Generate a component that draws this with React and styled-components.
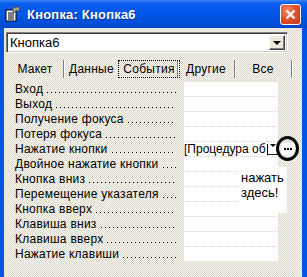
import styled, { createGlobalStyle } from "styled-components";

const GlobalStyle = createGlobalStyle`
  html, body { margin: 0; padding: 0; }
  body { font-family: "Liberation Sans", Arial, sans-serif; }
`;

const events = [
  "Вход",
  "Выход",
  "Получение фокуса",
  "Потеря фокуса",
  "Нажатие кнопки",
  "Двойное нажатие кнопки",
  "Кнопка вниз",
  "Перемещение указателя",
  "Кнопка вверх",
  "Клавиша вниз",
  "Клавиша вверх",
  "Нажатие клавиши",
];

const tabs = ["Макет", "Данные", "События", "Другие", "Все"];
const ACTIVE_TAB = 2;
const ACTIVE_ROW = 4;

const Window = styled.div`
  width: 307px;
  height: 277px;
  overflow: hidden;
  display: flex;
  flex-direction: column;
  background: #0055e5;
`;

const TitleBar = styled.div`
  height: 28px;
  flex: none;
  display: flex;
  align-items: center;
  padding: 0 6px 0 5px;
  background: linear-gradient(#3a86f5, #0a5cee 12%, #0055e5 55%, #004fd9 85%, #0044c2);
`;

const Title = styled.span`
  margin-left: 6px;
  color: #fff;
  font-weight: bold;
  font-size: 13px;
  letter-spacing: 0.2px;
  text-shadow: 1px 1px #0b2f8f;
`;

const CloseButton = styled.div`
  margin-left: auto;
  width: 19px;
  height: 19px;
  border: 1px solid #fff;
  border-radius: 3px;
  background: radial-gradient(circle at 35% 30%, #f08a6a, #e0532e 45%, #c23a18);
  display: flex;
  align-items: center;
  justify-content: center;
`;

const Body = styled.div`
  flex: 1;
  margin: 0 5px 0 4px;
  padding: 4px 0 0 2px;
  position: relative;
  display: flex;
  flex-direction: column;
  background-color: #ece9d8;
  background-image: repeating-conic-gradient(#fbfaf6 0% 25%, #d9d5c7 0% 50%);
  background-size: 2px 2px;
`;

const Combo = styled.div`
  width: 282px;
  height: 21px;
  box-sizing: border-box;
  display: flex;
  align-items: center;
  background: #fff;
  border-top: 1px solid #808080;
  border-left: 1px solid #808080;
  border-bottom: 1px solid #fff;
  border-right: 1px solid #fff;
  box-shadow: inset 1px 1px #404040, inset -1px -1px #d4d0c8;
  padding: 2px 2px 2px 3px;
  font-size: 13px;
`;

const ComboText = styled.span`
  flex: 1;
`;

const DropButton = styled.span`
  width: 16px;
  height: 15px;
  box-sizing: border-box;
  display: flex;
  align-items: center;
  justify-content: center;
  background: #ece9d8;
  border-top: 1px solid #fff;
  border-left: 1px solid #fff;
  border-right: 1px solid #404040;
  border-bottom: 1px solid #404040;
  box-shadow: inset -1px -1px #808080;
`;

const Arrow = styled.span`
  width: 0;
  height: 0;
  border-left: ${(p) => p.$s || 4}px solid transparent;
  border-right: ${(p) => p.$s || 4}px solid transparent;
  border-top: ${(p) => p.$s || 4}px solid #000;
`;

const TabRow = styled.div`
  display: flex;
  margin-top: 7px;
  padding-left: 1px;
  height: 19px;
`;

const Tab = styled.div`
  width: 57px;
  height: 18px;
  box-sizing: border-box;
  display: flex;
  align-items: center;
  justify-content: center;
  font-size: 12px;
  letter-spacing: 0.25px;
  border-right: ${(p) => (p.$hideSep ? "2px solid transparent" : "1px solid #808080")};
  box-shadow: ${(p) => (p.$hideSep ? "none" : "1px 0 #fff")};
`;

const TabFocus = styled.span`
  outline: 1px dotted #000;
  padding: 1px 4px;
`;

const Sheet = styled.div`
  margin-top: 3px;
  display: grid;
  grid-template-columns: 178px 94px 24px;
  grid-auto-rows: 14px;
  row-gap: 1px;
  font-size: 12px;
  letter-spacing: 0.25px;
`;

const Label = styled.div`
  display: flex;
  align-items: center;
  padding: 0 8px 0 9px;
  white-space: nowrap;
`;

const Leader = styled.span`
  flex: 1;
  align-self: flex-end;
  height: 1px;
  margin: 0 0 3px 4px;
  background: linear-gradient(90deg, #000 1px, transparent 1px) 0 0 / 4px 1px repeat-x;
`;

const Value = styled.div`
  background: #fff;
  display: flex;
  align-items: center;
  white-space: nowrap;
  overflow: hidden;
  letter-spacing: 0;
`;

const Caret = styled.span`
  width: 1px;
  height: 11px;
  background: #000;
  margin-left: 1px;
`;

const CellDrop = styled.span`
  margin-left: 1px;
  width: 15px;
  height: 10px;
  display: flex;
  align-items: flex-start;
  justify-content: center;
  border-bottom: 1px solid #202020;
  padding-top: 1px;
`;

const BuilderCell = styled.div`
  position: relative;
  display: flex;
  align-items: center;
  padding-left: 3px;
`;

const Builder = styled.span`
  width: 14px;
  height: 12px;
  background: #fff;
  display: flex;
  align-items: center;
  justify-content: center;
  gap: 1px;
`;

const Dot = styled.span`
  width: 2px;
  height: 2px;
  background: #000;
`;

const Ring = styled.span`
  position: absolute;
  left: -2px;
  top: -6px;
  width: 17px;
  height: 19px;
  border: 3px solid #000;
  border-radius: 50%;
`;

const Note = styled.div`
  position: absolute;
  left: 235px;
  top: 139px;
  width: 48px;
  height: 46px;
  box-sizing: border-box;
  padding: 3px 0 0 2px;
  background: #fff;
  font-size: 13px;
  line-height: 15px;
`;

function SheetIcon() {
  return (
    <svg width="16" height="16" viewBox="0 0 16 16">
      <rect x="1" y="4" width="10" height="11" fill="#fff" stroke="#000" />
      <line x1="3" y1="7" x2="9" y2="7" stroke="#000" />
      <line x1="3" y1="9" x2="9" y2="9" stroke="#000" />
      <line x1="3" y1="11" x2="9" y2="11" stroke="#000" />
      <line x1="3" y1="13" x2="9" y2="13" stroke="#000" />
      <path d="M7 3 L10 1 L14 1 L15 3 L14 5 L11 5 L9 7 Z" fill="#9a9a9a" stroke="#404040" strokeWidth="0.8" />
    </svg>
  );
}

export default function App() {
  return (
    <>
      <GlobalStyle />
      <Window>
        <TitleBar>
          <SheetIcon />
          <Title>Кнопка: Кнопка6</Title>
          <CloseButton>
            <svg width="11" height="11" viewBox="0 0 11 11">
              <path d="M1.5 1.5 L9.5 9.5 M9.5 1.5 L1.5 9.5" stroke="#fff" strokeWidth="2.2" />
            </svg>
          </CloseButton>
        </TitleBar>
        <Body>
          <Combo>
            <ComboText>Кнопка6</ComboText>
            <DropButton>
              <Arrow $s={4} />
            </DropButton>
          </Combo>
          <TabRow>
            {tabs.map((t, i) => (
              <Tab key={t} $hideSep={i === ACTIVE_TAB - 1}>
                {i === ACTIVE_TAB ? <TabFocus>{t}</TabFocus> : t}
              </Tab>
            ))}
          </TabRow>
          <Sheet>
            {events.flatMap((e, i) => [
              <Label key={e + "l"}>
                {e}
                <Leader />
              </Label>,
              <Value key={e + "v"}>
                {i === ACTIVE_ROW && (
                  <>
                    [Процедура об
                    <Caret />
                    <CellDrop>
                      <Arrow $s={3} />
                    </CellDrop>
                  </>
                )}
              </Value>,
              <BuilderCell key={e + "b"}>
                {i === ACTIVE_ROW && (
                  <>
                    <Builder>
                      <Dot />
                      <Dot />
                      <Dot />
                    </Builder>
                    <Ring />
                  </>
                )}
              </BuilderCell>,
            ])}
          </Sheet>
          <Note>
            нажать
            <br />
            здесь!
          </Note>
        </Body>
      </Window>
    </>
  );
}
